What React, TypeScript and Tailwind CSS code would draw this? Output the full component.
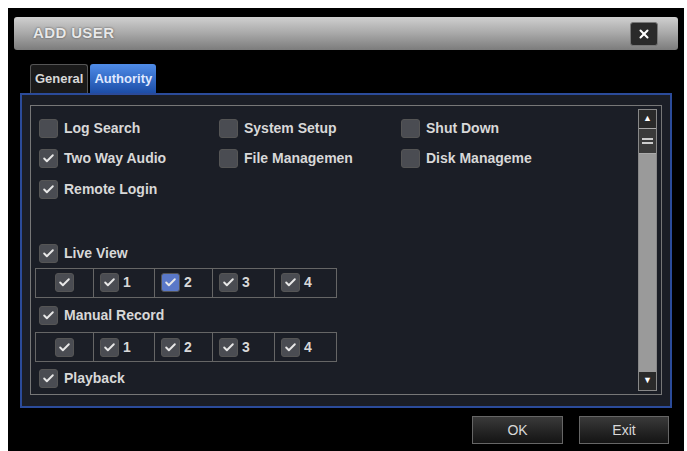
import { Check, X } from 'lucide-react';

function Box({ on, blue }: { on?: boolean; blue?: boolean }) {
  return (
    <span
      className={`flex h-[19px] w-[19px] shrink-0 items-center justify-center rounded-[3px] border border-[#555] ${
        blue ? 'bg-[#5a78c8]' : 'bg-[#4a4c52]'
      }`}
    >
      {on && <Check size={13} strokeWidth={3.5} className="text-[#e8e8e8]" />}
    </span>
  );
}

function Item({ label, on, w }: { label: string; on?: boolean; w?: string }) {
  return (
    <div className={`flex items-center gap-[6px] ${w ?? ''}`}>
      <Box on={on} />
      <span className="whitespace-nowrap">{label}</span>
    </div>
  );
}

function Channels({ blueIdx }: { blueIdx?: number }) {
  const cells = ['', '1', '2', '3', '4'];
  const widths = ['w-[58px]', 'w-[61px]', 'w-[58px]', 'w-[62px]', 'w-[61px]'];
  return (
    <div className="flex h-[30px] w-fit border border-[#666]">
      {cells.map((c, i) => (
        <div
          key={i}
          className={`flex items-center gap-[4px] ${widths[i]} ${i < 4 ? 'border-r border-[#666]' : ''} ${c === '' ? 'justify-center' : 'justify-start pl-[6px]'}`}
        >
          <Box on blue={i === blueIdx} />
          {c && <span>{c}</span>}
        </div>
      ))}
    </div>
  );
}

export default function App() {
  return (
    <div
      className="h-[451px] w-[687px] bg-white pl-[8px] pt-[8px] text-[14px] font-bold text-[#d8d8d8]"
      style={{ fontFamily: '"Liberation Sans", Arial, sans-serif' }}
    >
      <div className="flex h-[443px] w-[676px] flex-col bg-black px-[6px] pt-[9px]">
        {/* title */}
        <div className="flex h-[33px] items-center justify-between rounded-[3px] bg-gradient-to-b from-[#d0d0d0] via-[#a8a8a8] to-[#7c7c7c] pl-[19px] pr-[20px]">
          <span className="text-[15px] tracking-wide text-[#e8e8e8] [text-shadow:0_0_2px_#444]">ADD USER</span>
          <span className="flex h-[24px] w-[28px] items-center justify-center rounded-[3px] border border-[#777] bg-[#2a2a2a]">
            <X size={14} strokeWidth={3.5} className="text-white" />
          </span>
        </div>
        {/* tabs */}
        <div className="ml-[16px] mt-[13px] flex h-[30px] items-end gap-[2px]">
          <div className="flex h-[29px] items-center rounded-t-[3px] border border-[#555] border-b-0 bg-[#1a1a1a] px-[4px] text-[13px]">General</div>
          <div className="flex h-[29px] items-center rounded-t-[3px] bg-gradient-to-b from-[#4f8ce8] to-[#1d4ea8] px-[4px] text-[13px] text-[#dfe8ff]">Authority</div>
        </div>
        {/* panel */}
        <div className="mx-[6px] h-[315px] border-2 border-[#2b4b9a] bg-[#1b1e26] px-[8px] pt-[10px]">
          <div className="flex h-[290px] border border-[#777]">
            <div className="flex flex-1 flex-col pl-[8px] pt-[7px]">
              <div className="flex h-[31px] items-center">
                <Item label="Log Search" w="w-[180px]" />
                <Item label="System Setup" w="w-[182px]" />
                <Item label="Shut Down" />
              </div>
              <div className="flex h-[31px] items-center">
                <Item label="Two Way Audio" on w="w-[180px]" />
                <Item label="File Managemen" w="w-[182px]" />
                <Item label="Disk Manageme" />
              </div>
              <div className="flex h-[31px] items-center">
                <Item label="Remote Login" on />
              </div>
              <div className="h-[34px]" />
              <div className="flex h-[30px] items-center">
                <Item label="Live View" on />
              </div>
              <div className="-ml-[4px]"><Channels blueIdx={2} /></div>
              <div className="flex h-[35px] items-center">
                <Item label="Manual Record" on />
              </div>
              <div className="-ml-[4px]"><Channels /></div>
              <div className="flex h-[32px] items-center">
                <Item label="Playback" on />
              </div>
            </div>
            {/* scrollbar */}
            <div className="my-[3px] mr-[4px] flex w-[19px] flex-col border border-[#888] bg-[#9a9a9a]">
              <div className="flex h-[18px] items-center justify-center bg-[#2a2a2a] text-[9px] text-white">▲</div>
              <div className="flex h-[26px] flex-col justify-center gap-[2px] border-y border-[#aaa] bg-[#3a3a3a] px-[3px]">
                <span className="h-[2px] bg-[#ccc]" />
                <span className="h-[2px] bg-[#ccc]" />
              </div>
              <div className="flex-1" />
              <div className="flex h-[18px] items-center justify-center bg-[#2a2a2a] text-[9px] text-white">▼</div>
            </div>
          </div>
        </div>
        {/* buttons */}
        <div className="mt-[8px] flex justify-end gap-[16px] pr-[9px]">
          <div className="flex h-[28px] w-[91px] items-center justify-center border border-[#666] bg-gradient-to-b from-[#3a3a3a] to-[#141414] font-normal">OK</div>
          <div className="flex h-[28px] w-[90px] items-center justify-center border border-[#666] bg-gradient-to-b from-[#3a3a3a] to-[#141414] font-normal">Exit</div>
        </div>
      </div>
    </div>
  );
}
